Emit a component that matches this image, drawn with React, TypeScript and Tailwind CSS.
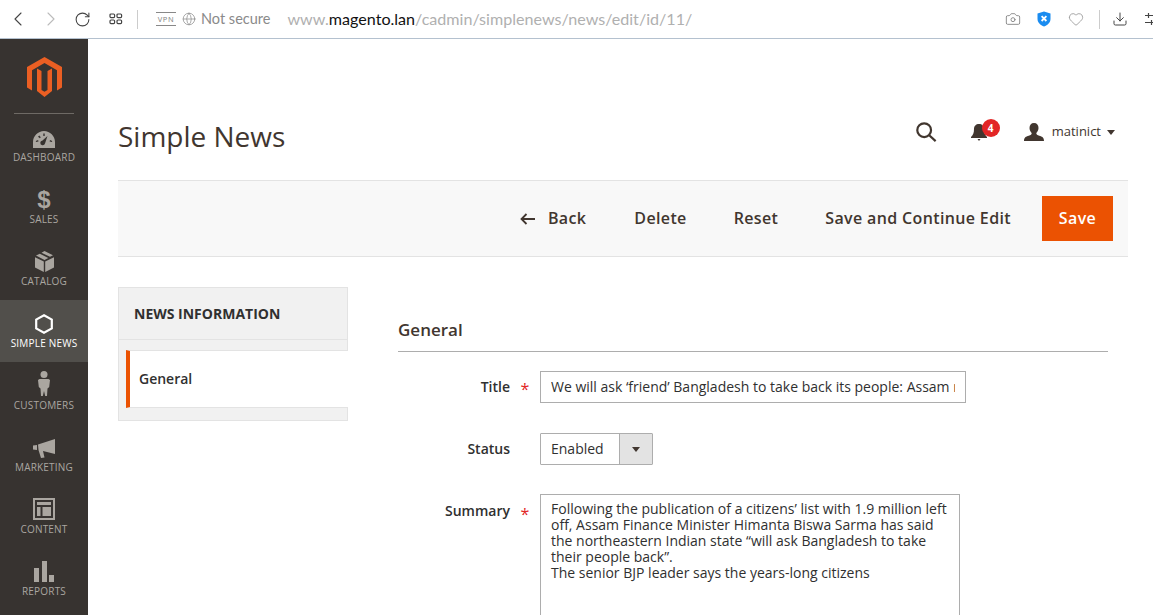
import React from "react";
import { ChevronLeft, ChevronRight, RotateCw, Globe, Camera, Heart, Download } from "lucide-react";

const Nav = ({ icon, label, active }: { icon: React.ReactNode; label: string; active?: boolean }) => (
  <div className={`h-[62px] flex flex-col items-center ${active ? "bg-[#514f4b] text-white" : "text-[#aaa6a0]"}`}>
    <div className="h-[34px] w-full flex items-end justify-center">{icon}</div>
    <div className="mt-[2px] text-[10px] leading-[14px] tracking-[0.2px] whitespace-nowrap">{label}</div>
  </div>
);

const F = "#aaa6a0";

export default function App() {
  return (
    <div className="w-[1153px] h-[615px] overflow-hidden bg-white font-['Open_Sans',sans-serif] text-[#303030] flex flex-col">
      {/* browser bar */}
      <div className="h-[39px] shrink-0 border-b border-[#b4c1cf] flex items-center bg-white font-['Lato',sans-serif]">
        <ChevronLeft className="ml-[6px] w-[24px] h-[24px] text-[#444]" strokeWidth={1.1} />
        <ChevronRight className="ml-[9px] w-[24px] h-[24px] text-[#bbb]" strokeWidth={1.1} />
        <RotateCw className="ml-[11px] w-[17px] h-[17px] text-[#444]" strokeWidth={1.5} />
        <svg className="ml-[18px]" width="14" height="12" viewBox="0 0 14 12" fill="none" stroke="#444" strokeWidth="1.2">
          <rect x="1" y="1" width="4.6" height="3.6" rx="1" /><rect x="8" y="1" width="4.6" height="3.6" rx="1" />
          <rect x="1" y="7" width="4.6" height="3.6" rx="1" /><rect x="8" y="7" width="4.6" height="3.6" rx="1" />
        </svg>
        <div className="ml-[14px] w-px h-[19px] bg-[#ccc]" />
        <div className="ml-[18px] w-[20px] h-[14px] border-y border-[#888] text-[7.5px] leading-[12px] text-[#888] tracking-[0.6px] text-center font-['Noto_Sans',sans-serif]">VPN</div>
        <Globe className="ml-[6px] w-[14px] h-[14px] text-[#888]" strokeWidth={1.2} />
        <span className="ml-[5px] text-[14.500px] text-[#8a8a8a]">Not secure</span>
        <span className="ml-[17px] text-[16.100px] text-[#b0b0b0] whitespace-nowrap">www.<span className="text-[#111]">magento.lan</span>/cadmin/simplenews/news/edit/id/11/</span>
        <div className="ml-auto flex items-center">
          <Camera className="w-[16px] h-[16px] text-[#888]" strokeWidth={1.4} />
          <svg className="ml-[16px]" width="14" height="16" viewBox="0 0 14 16">
            <path d="M7 .5 13.500 2.500V8c0 3.600-2.800 6-6.500 7.500C3.300 14 .5 11.600.5 8V2.500Z" fill="#1a8cf0" />
            <path d="M4.600 5.200 9.400 10M9.400 5.200 4.600 10" stroke="#fff" strokeWidth="1.800" />
          </svg>
          <Heart className="ml-[17px] w-[16px] h-[16px] text-[#999]" strokeWidth={1.3} />
          <div className="ml-[15px] w-px h-[19px] bg-[#ccc]" />
          <Download className="ml-[12px] w-[16px] h-[16px] text-[#444]" strokeWidth={1.5} />
          <svg className="ml-[17px] mr-[-2px]" width="10" height="14" viewBox="0 0 10 14" stroke="#444" strokeWidth="1.200" fill="none">
            <path d="M0 3.500h10M0 10.500h10M3.500 1v5M6.500 8v5" />
          </svg>
        </div>
      </div>

      <div className="flex-1 flex min-h-0">
        {/* sidebar */}
        <div className="w-[88px] shrink-0 bg-[#373330]">
          <div className="h-[75px] flex flex-col items-center">
            <svg className="mt-[18px]" width="35" height="40" viewBox="27 57 35 40" fill="#eb5f23">
              <path d="M44.500 57 62 67v20.500l-5 3V70.300L44.500 63 32 70.300v20.200l-5-3V67Z" />
              <path d="M47.500 71 52 68.500V91l-7.500 6L37 91V68.500L41.500 71v19l3 1.700 3-1.700Z" />
            </svg>
            <div className="mt-auto w-[60px] h-px bg-[#6e6a65]" />
          </div>
          <Nav label="DASHBOARD" icon={
            <svg width="22" height="17" viewBox="0 0 22 17"><path fillRule="evenodd" fill={F} d="M0 17V11C0 5 5 0 11 0s11 5 11 11v6Zm14.500-12L9.500 9.500a2.400 2.400 0 1 0 2.500 3ZM3 11l2.500-.5-.4-1.400-2.300.8ZM5 5.800l1.800 1.500 1-1-1.500-1.900ZM10.300 2.500v2.500h1.400V2.500ZM17 9.100l-.4 1.400 2.400.5.200-1.100Z" /></svg>
          } />
          <Nav label="SALES" icon={<span className="mb-[-2px] text-[24px] leading-[24px] font-bold text-[#aaa6a0] font-['Liberation_Sans',sans-serif]">$</span>} />
          <Nav label="CATALOG" icon={
            <svg width="19" height="21" viewBox="0 0 19 21" fill={F}>
              <path d="M0 6.200 8.800 10.500V21L0 16.500ZM19 6.200 10.200 10.500V21L19 16.500ZM6.500 1.800 9.500 0 18 4.300 15 5.800ZM4.800 2.700 13.300 7l-3.800 2L1 4.600Z" />
            </svg>
          } />
          <Nav active label="SIMPLE NEWS" icon={
            <svg width="18" height="20" viewBox="0 0 18 20" fill="none" stroke="#fff" strokeWidth="2.200"><path d="M9 1.300 16.800 5.600v8.800L9 18.700 1.200 14.400V5.600Z" /></svg>
          } />
          <Nav label="CUSTOMERS" icon={
            <svg width="12" height="25" viewBox="0 0 12 25" fill={F}>
              <circle cx="6" cy="3.500" r="3.500" /><path d="M1.500 8h9l1.500 1-.8 7-1.700 1.500-.5 7.500H7.200L6 20l-1.200 5H3l-.5-7.500L.8 16 0 9Z" />
            </svg>
          } />
          <Nav label="MARKETING" icon={
            <svg width="22" height="19" viewBox="0 0 22 19" fill={F}>
              <path d="M0 6.500 4 6v5l-4-.5ZM5 5.500 22 0v15L10 12l1.500 6.500-3.500.5-2.500-8Z" />
            </svg>
          } />
          <Nav label="CONTENT" icon={
            <svg width="22" height="22" viewBox="0 0 22 22" fill={F}>
              <path fillRule="evenodd" d="M0 0h22v22H0Zm2 2v18h18V2Z" /><path d="M4 4h14v3H4ZM4 9h3.500v9H4ZM9.500 9H18v9H9.500Z" />
            </svg>
          } />
          <Nav label="REPORTS" icon={
            <svg width="20" height="21" viewBox="0 0 20 21" fill={F}><path d="M0 7h5v14H0ZM8 0h5v21H8ZM15 14h5v7h-5Z" /></svg>
          } />
        </div>

        {/* main */}
        <div className="flex-1 min-w-0 pl-[30px] pr-[25px]">
          <div className="h-[141px] flex items-start">
            <h1 className="mt-[77px] text-[28px] leading-[40px] font-normal text-[#41362f]">Simple News</h1>
            <div className="ml-auto mt-[78px] flex items-center h-[30px] pr-[13px]">
              <svg width="22" height="22" viewBox="0 0 24 24" fill="none" stroke="#41362f" strokeWidth="2.400"><circle cx="10" cy="10" r="7.500" /><path d="m15.500 15.500 7 6.500" /></svg>
              <div className="relative ml-[34px] w-[18px] h-[18px] mt-[2px]">
                <svg width="16" height="17" viewBox="0 0 16 17" fill="#41362f"><path d="M8 0c3 0 5 2 5 5 0 4 1 6 3 8v1H0v-1c2-2 3-4 3-8 0-3 2-5 5-5ZM6.500 15h3L8 17Z" /></svg>
                <div className="absolute left-[11px] top-[-5px] w-[18px] h-[18px] rounded-full bg-[#e22626] text-white text-[10px] font-bold leading-[18px] text-center">4</div>
              </div>
              <svg className="ml-[35px]" width="20" height="18" viewBox="0 0 20 18" fill="#41362f"><path d="M10 0c3 0 4.500 2 4.500 5 0 2-1 3.800-2.200 5 0 1.500 1 2 3 2.700 2.700 1 4.700 1.500 4.700 5.300H0c0-3.800 2-4.300 4.700-5.300 2-.7 3-1.200 3-2.700C6.500 8.800 5.500 7 5.500 5c0-3 1.500-5 4.500-5Z" /></svg>
              <span className="ml-[8px] text-[13px] text-[#41362f]">matinict</span>
              <span className="ml-[6px] w-0 h-0 border-x-[4.500px] border-x-transparent border-t-[5px] border-t-[#41362f]" />
            </div>
          </div>

          <div className="h-[77px] bg-[#f8f8f8] border-y border-[#e3e3e3] flex items-center justify-end pr-[15px] text-[16px] font-semibold tracking-[0.36px] text-[#41362f]">
            <svg className="mr-[13px]" width="15" height="12" viewBox="0 0 15 12" fill="none" stroke="#41362f" strokeWidth="1.800"><path d="M15 6H1.500M6.500 1 1.500 6l5 5" /></svg>
            <span className="mt-[-2px]">Back</span>
            <span className="ml-[48px] mt-[-2px]">Delete</span>
            <span className="ml-[47px] mt-[-2px]">Reset</span>
            <span className="ml-[47px] mt-[-2px]">Save and Continue Edit</span>
            <span className="ml-[31px] w-[71px] h-[45px] pb-[2px] bg-[#eb5202] text-white flex items-center justify-center">Save</span>
          </div>

          <div className="flex mt-[30px]">
            <div className="w-[230px] shrink-0">
              <div className="h-[134px] bg-[#f1f1f1] border border-[#e3e3e3] flex flex-col">
                <div className="h-[52px] flex items-center pl-[15px] text-[14px] font-bold text-[#303030] border-b border-[#e3e3e3]">NEWS INFORMATION</div>
                <div className="h-[10px]" />
                <div className="h-[58px] pb-[2px] bg-white border-y border-[#e3e3e3] ml-[7px] border-l-[4px] border-l-[#eb5202] flex items-center pl-[9px] text-[14px] font-semibold text-[#303030] -mr-px">General</div>
              </div>
            </div>
            <div className="ml-[50px] flex-1 pr-[20px]">
              <div className="mt-[32px] h-[33px] border-b border-[#adadad] text-[17px] leading-[22px] font-semibold text-[#41362f]">General</div>
              <div className="mt-[19px] flex items-center h-[32px]">
                <label className="w-[112px] mt-[-2px] text-right text-[14px] font-semibold">Title</label>
                <span className="w-[30px] mt-[4px] text-center text-[#e22626] text-[16px]">*</span>
                <input readOnly value="We will ask ‘friend’ Bangladesh to take back its people: Assam minister" className="w-[426px] h-[32px] pb-[2px] border border-[#adadad] px-[10px] text-[14px] text-[#303030] outline-none bg-white" />
              </div>
              <div className="mt-[30px] flex items-center h-[32px]">
                <label className="w-[112px] mt-[-2px] text-right text-[14px] font-semibold">Status</label>
                <span className="w-[30px]" />
                <div className="w-[113px] h-[32px] border border-[#adadad] rounded-[1px] flex text-[14px]">
                  <div className="w-[78px] pb-[2px] flex items-center pl-[10px] bg-white">Enabled</div>
                  <div className="flex-1 bg-[#e3e3e3] border-l border-[#adadad] flex items-center justify-center">
                    <span className="w-0 h-0 border-x-[4.500px] border-x-transparent border-t-[5px] border-t-[#41362f]" />
                  </div>
                </div>
              </div>
              <div className="mt-[29px] flex items-start">
                <label className="w-[112px] mt-[6px] text-right text-[14px] font-semibold">Summary</label>
                <span className="w-[30px] mt-[8px] text-center text-[#e22626] text-[16px]">*</span>
                <textarea readOnly className="w-[420px] h-[200px] border border-[#adadad] px-[10px] py-[6px] text-[14px] leading-[16px] text-[#303030] outline-none resize-none overflow-hidden" value={"Following the publication of a citizens’ list with 1.9 million left off, Assam Finance Minister Himanta Biswa Sarma has said the northeastern Indian state “will ask Bangladesh to take their people back”.\nThe senior BJP leader says the years-long citizens"} />
              </div>
            </div>
          </div>
        </div>
      </div>
    </div>
  );
}
